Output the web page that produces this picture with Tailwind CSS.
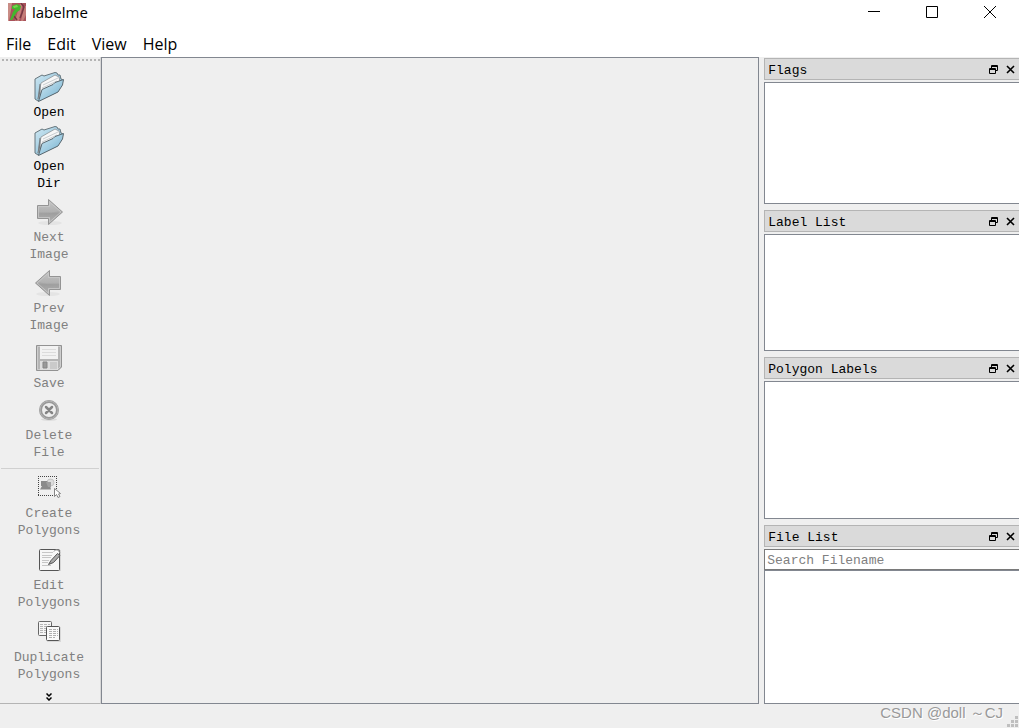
<!DOCTYPE html>
<html lang="en">
<head>
  <meta charset="UTF-8" />
  <meta name="viewport" content="width=device-width, initial-scale=1.0" />
  <title>labelme</title>
  <script src="https://cdn.jsdelivr.net/npm/@tailwindcss/browser@4"></script>
</head>
<body class="h-screen flex flex-col overflow-hidden bg-[#efefef] text-black font-['Liberation_Mono',monospace] text-[13px] leading-[17px]">
  <!-- Shared shapes -->
  <svg class="absolute size-0">
    <defs>
      <linearGradient id="blue" x1="0" y1="0" x2="1" y2="1">
        <stop offset="0" stop-color="#d2e9f3" /><stop offset="0.5" stop-color="#a2cde2" /><stop offset="1" stop-color="#6eaccb" />
      </linearGradient>
      <linearGradient id="gray" x1="0" y1="0" x2="0" y2="1">
        <stop offset="0" stop-color="#c6c6c6" /><stop offset="0.5" stop-color="#b0b0b0" /><stop offset="0.55" stop-color="#a0a0a0" /><stop offset="1" stop-color="#bdbdbd" />
      </linearGradient>
      <symbol id="folder" viewBox="0 0 32 32">
        <path d="M2 8 L9 4 L11 5 L22 1.5 L24 2 L25 4 L27 4 L28 8 L30 9 L24 21 L5 30 L2 28 Z" fill="url(#blue)" stroke="#66757c" stroke-linejoin="round" />
        <path d="M8 12 L22 4 L26 6 L27 11 L9 20 L5 28 Z" fill="#f7f7f7" stroke="#8b9296" stroke-width="0.8" />
        <path d="M10 14 L25 7 M9 17 L24 10" stroke="#c9cdd0" fill="none" />
        <path d="M4.500 29 L6.500 13 L7.500 13 L7.500 22 Z" fill="#777d80" />
        <path d="M9 18.500 L20 13.500 L22 11.500 L30.500 8.500 L29.500 14 L25 21 L5.500 30.500 Z" fill="url(#blue)" stroke="#596870" stroke-linejoin="round" />
      </symbol>
      <symbol id="arrow" viewBox="0 0 32 32">
        <ellipse cx="17" cy="27" rx="12" ry="2" fill="#e4e4e4" />
        <path d="M4.500 9.500 H15.500 V3.500 L29.500 16 L15.500 28.500 V22.500 H4.500 Z" fill="url(#gray)" stroke="#949494" />
        <path d="M5.500 10.500 H16.500 V6 L28 16 L16.500 26 V21.500 H5.500 Z" fill="none" stroke="#c9c9c9" stroke-width="0.8" />
        <path d="M6 18 Q16 19 25 15 L27 16 L17 25 V21 H6 Z" fill="#9d9d9d" opacity="0.3" />
      </symbol>
      <symbol id="float" viewBox="0 0 9 9">
        <path d="M2.500 3 V0.500 H8.500 V5.500 H6.500 M0.500 3.500 H6.500 V8.500 H0.500 Z M2 1.500 H9 M0 4.500 H7" fill="none" stroke="#000" />
      </symbol>
      <symbol id="close" viewBox="0 0 9 9">
        <path d="M1 1 L8 8 M8 1 L1 8" stroke="#000" stroke-width="1.600" />
      </symbol>
    </defs>
  </svg>

  <header class="bg-white font-['Open_Sans',sans-serif] text-[15px] leading-6">
    <!-- Title bar -->
    <div class="flex items-start h-8 pl-2">
      <svg class="size-[18px] mt-[3px] mr-1.5" viewBox="0 0 18 18">
        <rect width="18" height="18" fill="#a9535b" />
        <path d="M0 0 H4 L3 7 L1 18 H0 Z" fill="#c98d86" />
        <path d="M12 1 L15 0 L11 18 H7 Z M16 3 H18 V12 L15 18 H13 Z" fill="#c47c78" />
        <path d="M13 0 L16 4 L14 10 L12 15 M6 13 L9 17" stroke="#753743" stroke-width="1.500" fill="none" />
        <path d="M4 3 L9 1 L13 3 L12 7 L9 9 L7 12 L4 17 L2 17 L5 9 L7 6 L4 6 Z" fill="#43b72e" />
        <path d="M5 3 L9 2 L10 4 L6 5 Z" fill="#77d64e" />
      </svg>
      <h1>labelme</h1>
      <div class="ml-auto flex">
        <button aria-label="Minimize" class="w-[58px] h-6 flex items-center justify-center">
          <svg class="size-3" viewBox="0 0 12 12"><path d="M0 5.500 H12" stroke="#000" /></svg>
        </button>
        <button aria-label="Maximize" class="w-[58px] h-6 flex items-center justify-center">
          <svg class="size-3" viewBox="0 0 12 12"><path d="M0.500 0.500 H11.500 V11.500 H0.500 Z" fill="none" stroke="#000" /></svg>
        </button>
        <button aria-label="Close" class="w-[58px] h-6 flex items-center justify-center">
          <svg class="size-3" viewBox="0 0 12 12"><path d="M0 0 L12 12 M12 0 L0 12" stroke="#000" /></svg>
        </button>
      </div>
    </div>
    <!-- Menu -->
    <nav class="flex items-start gap-4 h-[25px] px-1.5 text-base leading-6">
      <button>File</button>
      <button>Edit</button>
      <button>View</button>
      <button>Help</button>
    </nav>
  </header>

  <main class="flex-1 min-h-0 flex">
    <!-- Toolbar -->
    <div class="w-[101px] shrink-0 flex flex-col border-r border-b border-r-[#d8d8d8] border-b-[#b4b4b4] pt-0.5 text-[#808080]">
      <div class="h-0.5 shrink-0 bg-[repeating-linear-gradient(90deg,transparent_0_2px,#b4b4b4_2px_4px)]"></div>
      <div class="flex flex-col pt-2.5 pr-0.5">
        <div class="flex flex-col gap-1">
          <button class="flex flex-col items-center gap-px text-black">
            <svg class="size-8"><use href="#folder" /></svg>
            <span>Open</span>
          </button>
          <button class="flex flex-col items-center gap-px text-black">
            <svg class="size-8"><use href="#folder" /></svg>
            <span>Open<br>Dir</span>
          </button>
          <button disabled class="flex flex-col items-center gap-px">
            <svg class="size-8"><use href="#arrow" /></svg>
            <span>Next<br>Image</span>
          </button>
          <button disabled class="flex flex-col items-center gap-px">
            <svg class="size-8 -scale-x-100"><use href="#arrow" /></svg>
            <span>Prev<br>Image</span>
          </button>
        </div>
        <div class="flex flex-col gap-0.5 pt-2">
          <button disabled class="flex flex-col items-center gap-px">
            <svg class="size-8" viewBox="0 0 32 32">
              <path d="M3.500 3.500 H28.500 V25 L25 28.500 H3.500 Z" fill="#b5b5b5" stroke="#929292" />
              <path d="M4.500 4.500 H27.500 V24.500 L24.500 27.500 H4.500 Z" fill="none" stroke="#cecece" />
              <path d="M7 4 H25 V17 H7 Z" fill="#f2f2f2" />
              <path d="M9 7.500 H23 M9 10.500 H23 M9 13.500 H23" stroke="#dcdcdc" />
              <path d="M7 19 H25 V28 H7 Z" fill="#dedede" />
              <path d="M10 20 H14 V26 H10 Z" fill="#999" stroke="#858585" />
              <path d="M17 20 H24 V27 H17 Z" fill="#cacaca" />
            </svg>
            <span>Save</span>
          </button>
          <button disabled class="flex flex-col items-center gap-px">
            <svg class="size-8" viewBox="0 0 32 32">
              <ellipse cx="16" cy="25.500" rx="8" ry="1.500" fill="#dcdcdc" />
              <circle cx="16" cy="16" r="8.500" fill="#eee" stroke="#999" stroke-width="3" />
              <circle cx="16" cy="16" r="9" fill="none" stroke="#b5b5b5" />
              <path d="M13 13 L19 19 M19 13 L13 19" stroke="#858585" stroke-width="2.500" stroke-linecap="round" />
            </svg>
            <span>Delete<br>File</span>
          </button>
        </div>
      </div>
      <hr class="mt-[7px] mb-[3px] mx-px border-[#d0d0d0]" />
      <div class="flex flex-col gap-[5px] pr-0.5">
        <button disabled class="flex flex-col items-center gap-px">
          <svg class="size-8" viewBox="0 0 32 32">
            <path d="M7 6 H23 V22 H7 Z" fill="#f0f0f0" />
            <path d="M5.500 4 V24 M23.500 4 V18 M5 4.500 H24 M5 23.500 H21" fill="none" stroke="#444" stroke-dasharray="1 1" />
            <circle cx="17.500" cy="10.500" r="3.500" fill="#ddd" stroke="#c5c5c5" />
            <path d="M8 9 L14 9 L17 13 L18 17.500 H7 L9 14 H8 Z" fill="#8b8b8b" />
            <path d="M13 10 H18 V15 H15 Z" fill="#a0a0a0" />
            <path d="M21.500 16.500 V24.500 L23.500 22.500 L25 25.500 L27 24.500 L25.500 22 L27.500 21.500 Z" fill="#fff" stroke="#777" stroke-width="0.900" />
          </svg>
          <span>Create<br>Polygons</span>
        </button>
        <button disabled class="flex flex-col items-center gap-px">
          <svg class="size-8" viewBox="0 0 32 32">
            <path d="M7 6 H28 V27 H8 Z" fill="#d6d6d6" />
            <rect x="6.500" y="5.500" width="20" height="21" rx="1" fill="#f7f7f7" stroke="#555" />
            <path d="M9 8.500 H20 M9 11.500 H19 M9 13.500 H18 M9 16.500 H16 M9 18.500 H15 M9 21.500 H18" stroke="#c6c6c6" />
            <path d="M15.500 20.500 L18 16.500 L24.500 9.500 L27 11.500 L20.500 18.500 Z" fill="#aaa" stroke="#555" />
            <path d="M21 7.500 Q22 5 25 6 L27 9" fill="#fff" stroke="#888" />
          </svg>
          <span>Edit<br>Polygons</span>
        </button>
        <button disabled class="flex flex-col items-center gap-px">
          <svg class="size-8" viewBox="0 0 32 32">
            <rect x="5.500" y="5.500" width="13" height="14" rx="1" fill="#f5f5f5" stroke="#666" />
            <path d="M7 8.500 H17 M7 10.500 H17 M7 12.500 H13 M7 14.500 H13 M7 16.500 H13" stroke="#b5b5b5" stroke-dasharray="3 1" />
            <rect x="14" y="11" width="14" height="15" fill="#d8d8d8" />
            <rect x="13.500" y="10.500" width="13" height="14" rx="1" fill="#fafafa" stroke="#555" />
            <path d="M16 13.500 H25 M16 15.500 H25 M16 17.500 H25 M16 19.500 H25 M16 21.500 H22" stroke="#b0b0b0" stroke-dasharray="3 1" />
          </svg>
          <span>Duplicate<br>Polygons</span>
        </button>
      </div>
      <button aria-label="More tools" class="mt-auto mb-0.5 mr-0.5 flex justify-center">
        <svg class="w-1.5 h-2" viewBox="0 0 6 8"><path d="M0.500 0.500 L3 3 L5.500 0.500 M0.500 4.500 L3 7 L5.500 4.500" fill="none" stroke="#000" stroke-width="1.500" /></svg>
      </button>
    </div>

    <!-- Canvas -->
    <section aria-label="Canvas" class="flex-1 border border-[#828790]"></section>

    <!-- Docks -->
    <aside class="w-1/4 ml-[5px] pt-px flex flex-col gap-1.5">
      <section class="flex-[146] flex flex-col gap-0.5">
        <div class="h-[22px] flex items-center gap-2 pl-[3px] pr-1 border border-r-0 border-[#b4b4b4] bg-[#dadada]">
          <h2 class="mr-auto pt-0.5">Flags</h2>
          <button aria-label="Float Flags"><svg class="size-[9px]"><use href="#float" /></svg></button>
          <button aria-label="Close Flags"><svg class="size-[9px]"><use href="#close" /></svg></button>
        </div>
        <div class="flex-1 bg-white border border-r-0 border-[#828790]"></div>
      </section>
      <section class="flex-[141] flex flex-col gap-0.5">
        <div class="h-[22px] flex items-center gap-2 pl-[3px] pr-1 border border-r-0 border-[#b4b4b4] bg-[#dadada]">
          <h2 class="mr-auto pt-0.5">Label List</h2>
          <button aria-label="Float Label List"><svg class="size-[9px]"><use href="#float" /></svg></button>
          <button aria-label="Close Label List"><svg class="size-[9px]"><use href="#close" /></svg></button>
        </div>
        <div class="flex-1 bg-white border border-r-0 border-[#828790]"></div>
      </section>
      <section class="flex-[162] flex flex-col gap-0.5">
        <div class="h-[22px] flex items-center gap-2 pl-[3px] pr-1 border border-r-0 border-[#b4b4b4] bg-[#dadada]">
          <h2 class="mr-auto pt-0.5">Polygon Labels</h2>
          <button aria-label="Float Polygon Labels"><svg class="size-[9px]"><use href="#float" /></svg></button>
          <button aria-label="Close Polygon Labels"><svg class="size-[9px]"><use href="#close" /></svg></button>
        </div>
        <div class="flex-1 bg-white border border-r-0 border-[#828790]"></div>
      </section>
      <section class="flex-[179] flex flex-col gap-0.5">
        <div class="h-[22px] flex items-center gap-2 pl-[3px] pr-1 border border-r-0 border-[#b4b4b4] bg-[#dadada]">
          <h2 class="mr-auto pt-0.5">File List</h2>
          <button aria-label="Float File List"><svg class="size-[9px]"><use href="#float" /></svg></button>
          <button aria-label="Close File List"><svg class="size-[9px]"><use href="#close" /></svg></button>
        </div>
        <div class="flex-1 flex flex-col">
          <input type="text" aria-label="Search Filename" placeholder="Search Filename" class="h-[21px] px-0.5 pt-0.5 bg-white border border-r-0 border-[#7a7a7a] placeholder:text-[#808080]" />
          <div class="flex-1 bg-white border border-r-0 border-[#828790]"></div>
        </div>
      </section>
    </aside>
  </main>

  <!-- Status bar -->
  <footer class="h-6 shrink-0 flex items-start justify-end gap-1 pr-px">
    <p class="font-['Liberation_Sans',sans-serif] text-[15px] leading-[18px] text-[#999] [text-shadow:1px_1px_0_#fff]">CSDN @doll ～CJ</p>
    <svg class="size-[11px] self-end mb-px" viewBox="0 0 11 11">
      <path d="M8 0 h3 v3 h-3 z M4 4 h3 v3 h-3 z M8 4 h3 v3 h-3 z M0 8 h3 v3 h-3 z M4 8 h3 v3 h-3 z M8 8 h3 v3 h-3 z" fill="#bfbfbf" />
    </svg>
  </footer>
</body>
</html>
